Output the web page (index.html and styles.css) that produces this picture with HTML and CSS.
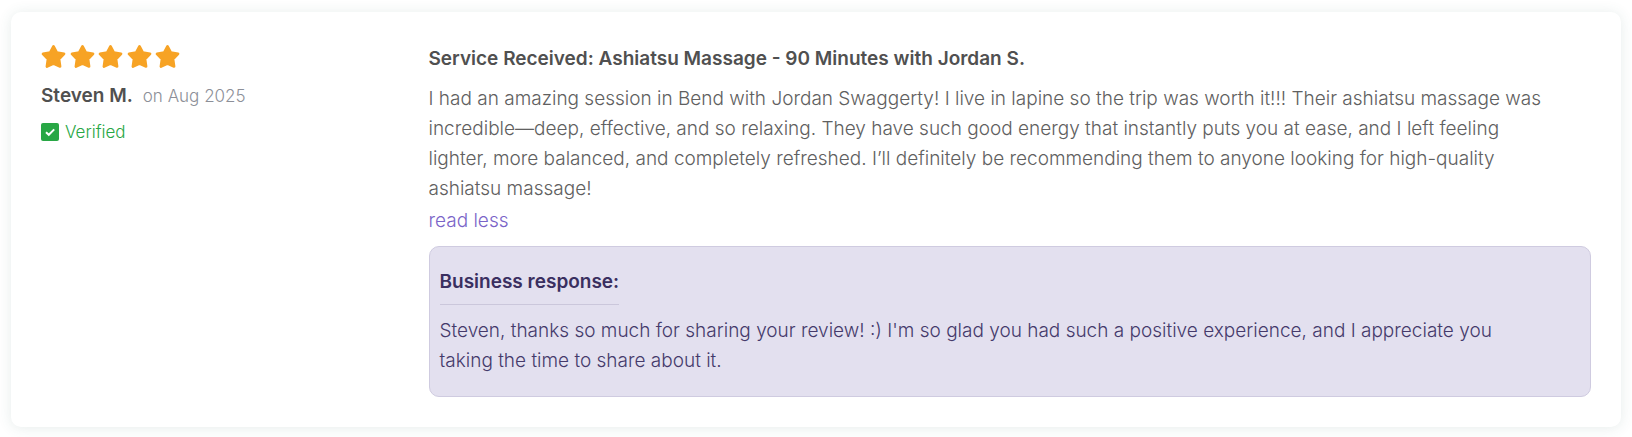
FILE: index.html
```html
<!DOCTYPE html>
<html lang="en">
<head>
    <meta charset="UTF-8">
    <meta name="viewport" content="width=device-width, initial-scale=1.0">
    <title>Reviews</title>
    <link rel="stylesheet" href="styles.css">
</head>
<body>
    <svg class="sprite" aria-hidden="true">
        <symbol id="star" viewBox="0 0 24 24">
            <path d="M12 1.8l3.2 6 6.9 1.2-4.8 5.1 1 7-6.3-2.8-6.3 2.8 1-7-4.8-5.1 6.9-1.2z" fill="#f7a325" stroke="#f7a325" stroke-width="2.6" stroke-linejoin="round"/>
        </symbol>
    </svg>

    <article class="review">
        <div class="reviewer">
            <div class="stars" role="img" aria-label="5 out of 5 stars">
                <svg><use href="#star"/></svg>
                <svg><use href="#star"/></svg>
                <svg><use href="#star"/></svg>
                <svg><use href="#star"/></svg>
                <svg><use href="#star"/></svg>
            </div>
            <div class="byline">
                <span class="name">Steven M.</span>
                <span class="date">on Aug 2025</span>
            </div>
            <div class="verified">
                <svg viewBox="0 0 18 18">
                    <rect width="18" height="18" rx="2" fill="#28a745"/>
                    <path d="M5 9.2l2.8 2.6 5.4-5.4" fill="none" stroke="#fff" stroke-width="2"/>
                </svg>
                <span>Verified</span>
            </div>
        </div>

        <div class="content">
            <h3 class="service">Service Received: Ashiatsu Massage - 90 Minutes with Jordan S.</h3>
            <p class="text">I had an amazing session in Bend with Jordan Swaggerty! I live in lapine so the trip was worth it!!! Their ashiatsu massage was incredible—deep, effective, and so relaxing. They have such good energy that instantly puts you at ease, and I left feeling lighter, more balanced, and completely refreshed. I’ll definitely be recommending them to anyone looking for high-quality ashiatsu massage!</p>
            <a class="toggle" href="#">read less</a>

            <div class="response">
                <h4 class="response-title">Business response:</h4>
                <p class="text">Steven, thanks so much for sharing your review! :) I'm so glad you had such a positive experience, and I appreciate you taking the time to share about it.</p>
            </div>
        </div>
    </article>
</body>
</html>
```
FILE: styles.css
```css
* {
    box-sizing: border-box;
}

body {
    margin: 0;
    padding: 12px 11px;
    font-family: Inter, "Liberation Sans", sans-serif;
    font-size: 19px;
    font-weight: 300;
    line-height: 30px;
    color: #505050;
    background: #fff;
}

h3, h4, p {
    margin: 0;
}

.sprite {
    display: none;
}

.review {
    display: flex;
    padding: 32px 30px 30px;
    background: #fff;
    border-radius: 10px;
    box-shadow: 0 1px 14px rgba(50, 100, 90, 0.12);
}

.reviewer {
    width: 25%;
}

.stars {
    display: flex;
    justify-content: space-between;
    width: 139px;
}

.stars svg {
    width: 25px;
    height: 26px;
}

.byline {
    display: flex;
    gap: 10px;
    margin-top: 11px;
}

.name {
    font-weight: 600;
}

.date {
    font-size: 17px;
    color: #8c8f98;
}

.verified {
    display: flex;
    align-items: center;
    gap: 6px;
    margin-top: 6px;
    font-size: 17px;
    color: #28a745;
}

.verified svg {
    width: 18px;
    height: 18px;
}

.content {
    width: 75%;
}

.service {
    margin-bottom: 10px;
    font-size: 19px;
    font-weight: 600;
}

.text {
    padding-right: 40px;
}

.content > .text {
    color: #606060;
}

.toggle {
    display: inline-block;
    margin-top: 2px;
    color: #7a64c8;
    text-decoration: none;
}

.response {
    margin-top: 10px;
    padding: 20px 10px;
    color: #453a6b;
    background: #e3e0ef;
    border: 1px solid #cfcbe0;
    border-radius: 10px;
}

.response-title {
    display: inline-block;
    margin-bottom: 11px;
    padding-bottom: 7px;
    font-size: 19px;
    font-weight: 600;
    color: #3a2f60;
    border-bottom: 1px solid #cbc7db;
}
```
